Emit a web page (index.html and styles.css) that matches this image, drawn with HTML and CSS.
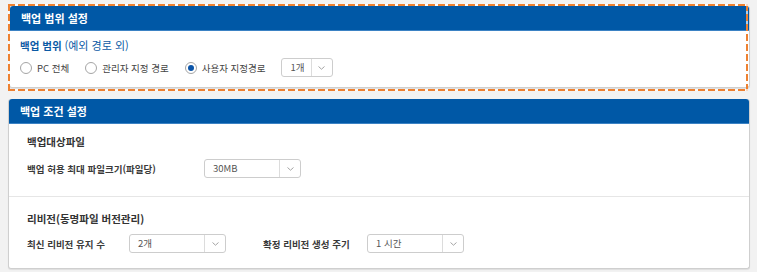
FILE: index.html
```html
<!DOCTYPE html>
<html lang="ko">
<head>
  <meta charset="UTF-8" />
  <title>백업 설정</title>
  <link rel="stylesheet" href="styles.css">
</head>
<body>
  <div class="panel panel-range highlight">
    <div class="panel-head">백업 범위 설정</div>
    <div class="panel-body range-body">
      <div class="range-title">백업 범위 <span class="light">(예외 경로 외)</span></div>
      <div class="radio-row">
        <label class="radio"><span class="dot"></span>PC 전체</label>
        <label class="radio"><span class="dot"></span>관리자 지정 경로</label>
        <label class="radio"><span class="dot checked"></span>사용자 지정경로</label>
        <div class="select select-small">
          <span class="value">1개</span>
          <span class="arrow"><svg width="7" height="4" viewBox="0 0 7 4"><path d="M0.5 0.5 L3.5 3.2 L6.5 0.5" fill="none" stroke="#9a9a9a" stroke-width="0.9"/></svg></span>
        </div>
      </div>
    </div>
  </div>

  <div class="panel panel-cond">
    <div class="panel-head">백업 조건 설정</div>
    <div class="section section-file">
      <div class="section-title">백업대상파일</div>
      <div class="form-row">
        <span class="label label-wide">백업 허용 최대 파일크기(파일당)</span>
        <div class="select">
          <span class="value">30MB</span>
          <span class="arrow"><svg width="7" height="4" viewBox="0 0 7 4"><path d="M0.5 0.5 L3.5 3.2 L6.5 0.5" fill="none" stroke="#9a9a9a" stroke-width="0.9"/></svg></span>
        </div>
      </div>
    </div>
    <div class="section section-rev">
      <div class="section-title">리비전(동명파일 버전관리)</div>
      <div class="form-row">
        <span class="label label-short">최신 리비전 유지 수</span>
        <div class="select">
          <span class="value">2개</span>
          <span class="arrow"><svg width="7" height="4" viewBox="0 0 7 4"><path d="M0.5 0.5 L3.5 3.2 L6.5 0.5" fill="none" stroke="#9a9a9a" stroke-width="0.9"/></svg></span>
        </div>
        <span class="label label-short label-gap">확정 리비전 생성 주기</span>
        <div class="select">
          <span class="value">1 시간</span>
          <span class="arrow"><svg width="7" height="4" viewBox="0 0 7 4"><path d="M0.5 0.5 L3.5 3.2 L6.5 0.5" fill="none" stroke="#9a9a9a" stroke-width="0.9"/></svg></span>
        </div>
      </div>
    </div>
  </div>
</body>
</html>
```

FILE: styles.css
```css
body {
  margin: 0;
  padding: 6px 0 0 0;
  background: #f2f2f2;
  font-family: "Noto Sans CJK KR", "Noto Sans", sans-serif;
  font-size: 9.5px;
  color: #333;
  width: 757px;
  height: 272px;
  overflow: hidden;
}

.panel {
  background: #fff;
  border: 1px solid #cfcfcf;
  border-top: none;
  border-radius: 3px;
  box-shadow: 0 1px 1px rgba(0, 0, 0, 0.08);
}
.panel-range {
  margin-left: 9px;
  width: 739px;
}
.panel-cond {
  margin: 11px 0 0 8px;
  width: 740px;
}

/* orange dashed focus frame */
.highlight {
  position: relative;
}
.highlight::after {
  content: "";
  position: absolute;
  top: -2px;
  left: -2px;
  right: 1px;
  bottom: -4px;
  pointer-events: none;
  background:
    repeating-linear-gradient(90deg, #ee8131 0 7px, rgba(255,255,255,0.7) 7px 10px) top left / 100% 2px no-repeat,
    repeating-linear-gradient(90deg, #ee8131 0 7px, rgba(255,255,255,0.7) 7px 10px) bottom left / 100% 2px no-repeat,
    repeating-linear-gradient(180deg, #ee8131 0 7px, rgba(255,255,255,0.7) 7px 10px) top left / 2px 100% no-repeat,
    repeating-linear-gradient(180deg, #ee8131 0 7px, rgba(255,255,255,0.7) 7px 10px) top right / 2px 100% no-repeat;
}

.panel-head {
  height: 25px;
  line-height: 24px;
  background: #0058a6;
  border-bottom: 1px solid #3b82c4;
  border-radius: 3px 3px 0 0;
  color: #fff;
  font-weight: bold;
  font-size: 11px;
  padding-left: 11px;
  box-sizing: border-box;
}

.range-body {
  padding: 7px 10px 10px 10px;
}
.range-title {
  color: #0b5aa5;
  font-weight: bold;
  line-height: 14px;
  font-size: 10.5px;
}
.range-title .light {
  font-weight: normal;
  font-size: 11px;
}

.radio-row {
  display: flex;
  align-items: center;
  margin-top: 5px;
  height: 19px;
}
.radio {
  display: flex;
  align-items: center;
  color: #444;
  margin-right: 16px;
}
.dot {
  width: 10px;
  height: 10px;
  border: 1px solid #a5a5a5;
  border-radius: 50%;
  margin-right: 5px;
  box-sizing: content-box;
  position: relative;
  background: #fff;
}
.dot.checked::after {
  content: "";
  position: absolute;
  top: 2px;
  left: 2px;
  width: 6px;
  height: 6px;
  border-radius: 50%;
  background: #0a54a8;
}

.select {
  display: flex;
  flex-shrink: 0;
  width: 97px;
  height: 19px;
  border: 1px solid #cdcdcd;
  border-radius: 3px;
  box-sizing: border-box;
  background: #fff;
}
.select .value {
  flex: 1;
  line-height: 17px;
  padding-left: 8px;
  color: #555;
}
.select .arrow {
  width: 20px;
  border-left: 1px solid #dcdcdc;
  display: flex;
  align-items: center;
  justify-content: center;
}
.select-small {
  width: 52px;
  margin-left: -1px;
}
.select-small .value {
  padding-left: 9px;
}

.section {
  padding: 11px 18px 18px 18px;
}
.section-rev {
  border-top: 1px solid #e6e6e6;
  padding-top: 15px;
  padding-bottom: 15px;
}
.section-title {
  font-weight: bold;
  font-size: 10.5px;
  line-height: 14px;
  color: #333;
}
.form-row {
  display: flex;
  align-items: center;
  margin-top: 10px;
}
.section-rev .form-row {
  margin-top: 8px;
}
.label {
  color: #3a3a3a;
  font-weight: bold;
  flex-shrink: 0;
  white-space: nowrap;
}
.label-wide {
  width: 177px;
}
.label-short {
  width: 102px;
}
.label-gap {
  margin-left: 37px;
  width: 104px;
}
```
